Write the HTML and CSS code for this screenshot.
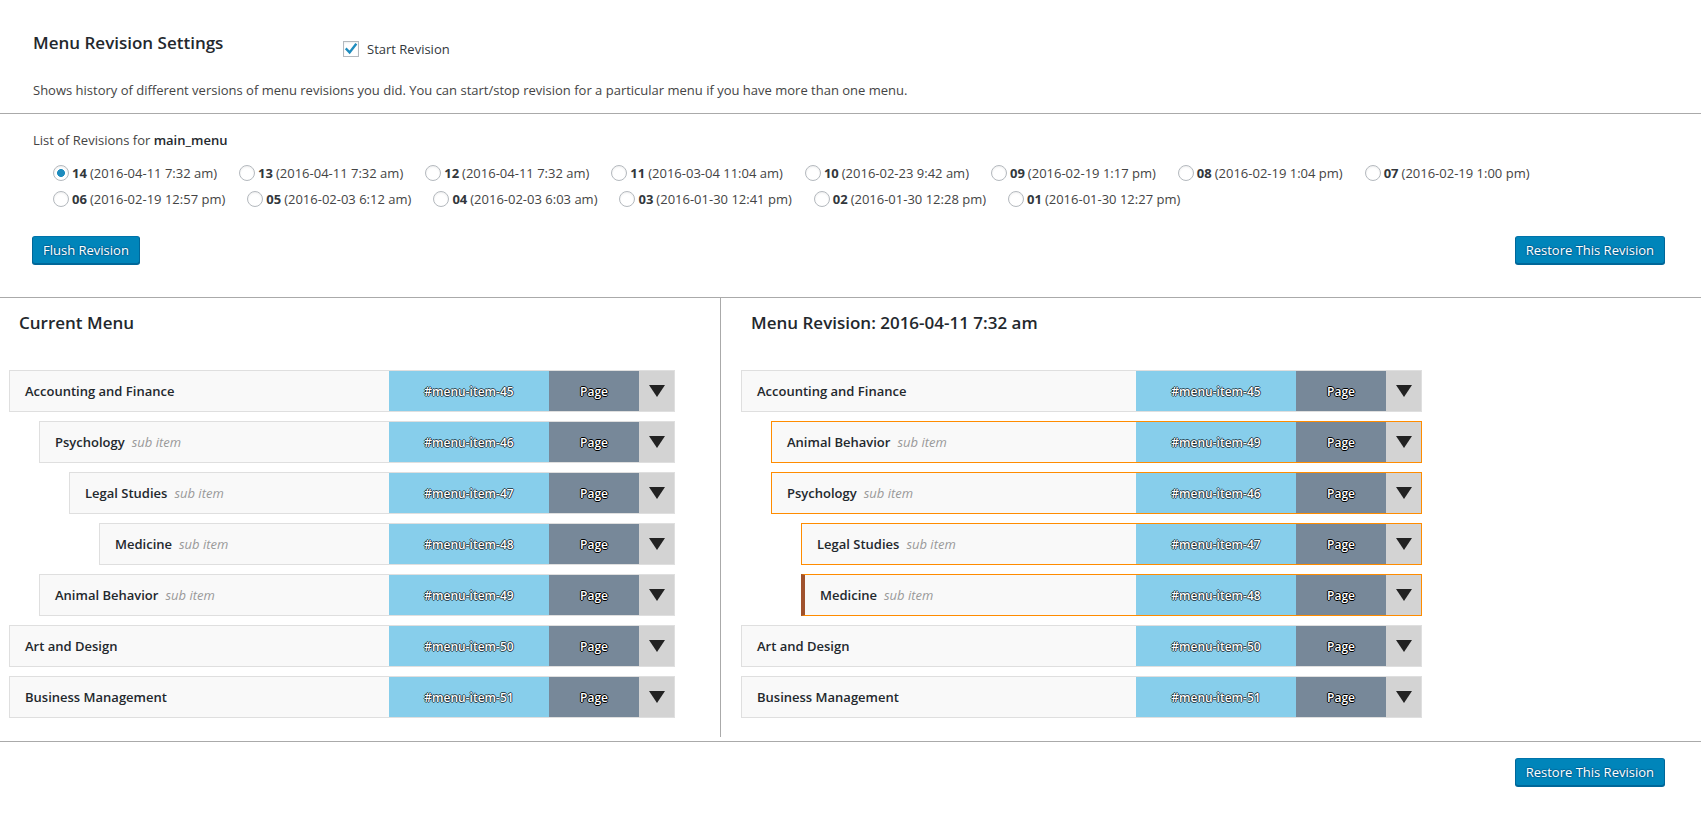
FILE: index.html
```html
<!DOCTYPE html>
<html lang="en">
<head>
<meta charset="utf-8">
<title>Menu Revision Settings</title>
<link rel="stylesheet" href="styles.css">
</head>
<body>
<section class="settings">
  <div class="settings-head">
    <h2 class="title">Menu Revision Settings</h2>
    <label class="start">
      <span class="checkbox"><svg width="14" height="14" viewBox="0 0 14 14"><path d="M2.6 7.2 L5.6 10.4 L11.6 2.6" stroke="#1e8cbe" stroke-width="2.4" fill="none" stroke-linecap="square"/></svg></span>
      <span>Start Revision</span>
    </label>
  </div>
  <p class="desc">Shows history of different versions of menu revisions you did. You can start/stop revision for a particular menu if you have more than one menu.</p>
</section>

<section class="revisions">
  <p class="list-title">List of Revisions for <b>main_menu</b></p>
  <div class="rev-rows">
    <div class="rev-row">
      <label class="rev"><span class="radio checked"></span><b>14</b> (2016-04-11 7:32 am)</label>
      <label class="rev"><span class="radio"></span><b>13</b> (2016-04-11 7:32 am)</label>
      <label class="rev"><span class="radio"></span><b>12</b> (2016-04-11 7:32 am)</label>
      <label class="rev"><span class="radio"></span><b>11</b> (2016-03-04 11:04 am)</label>
      <label class="rev"><span class="radio"></span><b>10</b> (2016-02-23 9:42 am)</label>
      <label class="rev"><span class="radio"></span><b>09</b> (2016-02-19 1:17 pm)</label>
      <label class="rev"><span class="radio"></span><b>08</b> (2016-02-19 1:04 pm)</label>
      <label class="rev"><span class="radio"></span><b>07</b> (2016-02-19 1:00 pm)</label>
    </div>
    <div class="rev-row">
      <label class="rev"><span class="radio"></span><b>06</b> (2016-02-19 12:57 pm)</label>
      <label class="rev"><span class="radio"></span><b>05</b> (2016-02-03 6:12 am)</label>
      <label class="rev"><span class="radio"></span><b>04</b> (2016-02-03 6:03 am)</label>
      <label class="rev"><span class="radio"></span><b>03</b> (2016-01-30 12:41 pm)</label>
      <label class="rev"><span class="radio"></span><b>02</b> (2016-01-30 12:28 pm)</label>
      <label class="rev"><span class="radio"></span><b>01</b> (2016-01-30 12:27 pm)</label>
    </div>
  </div>
  <div class="actions">
    <button class="btn">Flush Revision</button>
    <button class="btn">Restore This Revision</button>
  </div>
</section>

<section class="compare">
  <div class="col col-left">
    <h3 class="col-title">Current Menu</h3>
    <div class="menu-list">
      <div class="item lvl0"><span class="label">Accounting and Finance</span><span class="hash">#menu-item-45</span><span class="type">Page</span><span class="arrow"></span></div>
      <div class="item lvl1"><span class="label">Psychology<i>sub item</i></span><span class="hash">#menu-item-46</span><span class="type">Page</span><span class="arrow"></span></div>
      <div class="item lvl2"><span class="label">Legal Studies<i>sub item</i></span><span class="hash">#menu-item-47</span><span class="type">Page</span><span class="arrow"></span></div>
      <div class="item lvl3"><span class="label">Medicine<i>sub item</i></span><span class="hash">#menu-item-48</span><span class="type">Page</span><span class="arrow"></span></div>
      <div class="item lvl1"><span class="label">Animal Behavior<i>sub item</i></span><span class="hash">#menu-item-49</span><span class="type">Page</span><span class="arrow"></span></div>
      <div class="item lvl0"><span class="label">Art and Design</span><span class="hash">#menu-item-50</span><span class="type">Page</span><span class="arrow"></span></div>
      <div class="item lvl0"><span class="label">Business Management</span><span class="hash">#menu-item-51</span><span class="type">Page</span><span class="arrow"></span></div>
    </div>
  </div>
  <div class="col col-right">
    <h3 class="col-title">Menu Revision: 2016-04-11 7:32 am</h3>
    <div class="menu-list">
      <div class="item lvl0"><span class="label">Accounting and Finance</span><span class="hash">#menu-item-45</span><span class="type">Page</span><span class="arrow"></span></div>
      <div class="item lvl1 changed"><span class="label">Animal Behavior<i>sub item</i></span><span class="hash">#menu-item-49</span><span class="type">Page</span><span class="arrow"></span></div>
      <div class="item lvl1 changed"><span class="label">Psychology<i>sub item</i></span><span class="hash">#menu-item-46</span><span class="type">Page</span><span class="arrow"></span></div>
      <div class="item lvl2 changed"><span class="label">Legal Studies<i>sub item</i></span><span class="hash">#menu-item-47</span><span class="type">Page</span><span class="arrow"></span></div>
      <div class="item lvl2 changed moved"><span class="label">Medicine<i>sub item</i></span><span class="hash">#menu-item-48</span><span class="type">Page</span><span class="arrow"></span></div>
      <div class="item lvl0"><span class="label">Art and Design</span><span class="hash">#menu-item-50</span><span class="type">Page</span><span class="arrow"></span></div>
      <div class="item lvl0"><span class="label">Business Management</span><span class="hash">#menu-item-51</span><span class="type">Page</span><span class="arrow"></span></div>
    </div>
  </div>
</section>

<section class="bottom">
  <button class="btn">Restore This Revision</button>
</section>
</body>
</html>
```

FILE: styles.css
```css
* { box-sizing: border-box; }

body {
  margin: 0;
  background: #fff;
  color: #444;
  font-family: "Open Sans", "Noto Sans", sans-serif;
  font-size: 13px;
}

p { margin: 0; }

/* ---------- settings ---------- */
.settings {
  padding: 30px 36px 13px 33px;
  border-bottom: 1px solid #aaa;
}

.settings-head {
  display: flex;
  align-items: flex-start;
}

.title {
  margin: 0;
  width: 310px;
  font-size: 17px;
  font-weight: 600;
  line-height: 26px;
  color: #23282d;
}

.start {
  display: flex;
  align-items: center;
  gap: 8px;
  margin-top: 9px;
  line-height: 20px;
  color: #32373c;
}

.checkbox {
  width: 16px;
  height: 16px;
  border: 1px solid #b4b9be;
  background: #fff;
  box-shadow: inset 0 1px 2px rgba(0, 0, 0, 0.07);
  display: flex;
  align-items: center;
  justify-content: center;
}

.desc {
  margin-top: 21px;
  line-height: 20px;
}

/* ---------- revisions ---------- */
.revisions {
  padding: 16px 36px 33px 32px;
  border-bottom: 1px solid #aaa;
}

.list-title {
  line-height: 20px;
  padding-left: 1px;
}

.list-title b { font-weight: 600; color: #23282d; }

.rev-rows {
  margin: 10px 0 0 21px;
}

.rev-row {
  display: flex;
  height: 26px;
  align-items: center;
}

.rev {
  display: flex;
  align-items: center;
  margin-right: 22px;
  white-space: nowrap;
  color: #444;
}

.rev b { font-weight: 700; color: #32373c; margin-right: 3px; }

.radio {
  width: 16px;
  height: 16px;
  border-radius: 50%;
  border: 1px solid #b4b9be;
  background: #fff;
  box-shadow: inset 0 1px 2px rgba(0, 0, 0, 0.07);
  margin-right: 3px;
  flex: none;
}

.radio.checked {
  background: radial-gradient(circle, #1e8cbe 0, #1e8cbe 3.6px, #fff 4.3px);
}

.actions {
  margin-top: 24px;
  display: flex;
  justify-content: space-between;
}

.btn {
  font-family: inherit;
  font-size: 13px;
  line-height: 26px;
  height: 28px;
  padding: 0 10px 1px;
  border: 1px solid;
  border-color: #0073aa #006799 #006799;
  background: #0085ba;
  color: #fff;
  border-radius: 3px;
  box-shadow: 0 1px 0 #006799;
  text-shadow: 0 -1px 1px #006799, 1px 0 1px #006799, 0 1px 1px #006799, -1px 0 1px #006799;
  cursor: pointer;
}

/* ---------- compare ---------- */
.compare {
  display: flex;
  border-bottom: 1px solid #aaa;
  padding-bottom: 4px;
}

.col {
  padding-top: 13px;
  padding-bottom: 19px;
}

.col-left {
  width: 721px;
  border-right: 1px solid #aaa;
}

.col-right {
  flex: 1;
}

.col-title {
  margin: 0 0 35px;
  font-size: 17px;
  font-weight: 600;
  line-height: 24px;
  color: #23282d;
}

.col-left .col-title { padding-left: 19px; }
.col-right .col-title { padding-left: 30px; }

.col-left .menu-list { margin-left: 9px; width: 666px; }
.col-right .menu-list { margin-left: 20px; width: 681px; }

.item {
  display: flex;
  height: 42px;
  border: 1px solid #dfdfdf;
  background: #f9f9f9;
  margin-bottom: 9px;
}

.item:last-child { margin-bottom: 0; }

.lvl1 { margin-left: 30px; }
.lvl2 { margin-left: 60px; }
.lvl3 { margin-left: 90px; }

.item.changed { border-color: #ff8c00; }
.item.moved { border-left: 4px solid #a0522d; }
.item.moved .label { padding-left: 15px; }

.label {
  flex: 1;
  display: flex;
  align-items: center;
  padding-left: 15px;
  font-weight: 600;
  color: #23282d;
  white-space: nowrap;
}

.label i {
  font-style: italic;
  font-weight: 400;
  color: #999;
  margin-left: 7px;
}

.hash, .type {
  display: flex;
  align-items: center;
  justify-content: center;
  color: #fff;
  font-size: 12px;
  font-weight: 600;
  text-shadow: -1px 0 0 rgba(0, 0, 0, 0.65), 1px 0 0 rgba(0, 0, 0, 0.65), 0 -1px 0 rgba(0, 0, 0, 0.65), 0 1px 0 rgba(0, 0, 0, 0.65);
}

.hash { width: 160px; background: #87ceeb; }
.type { width: 90px; background: #778899; }
.type { text-shadow: -1px 0 0 #000, 1px 0 0 #000, 0 -1px 0 #000, 0 1px 0 #000; }

.arrow {
  width: 35px;
  background: #d3d3d3;
  display: flex;
  align-items: center;
  justify-content: center;
}

.arrow::after {
  content: "";
  width: 0;
  height: 0;
  border-left: 8.5px solid transparent;
  border-right: 8.5px solid transparent;
  border-top: 12px solid #222;
}

/* ---------- bottom ---------- */
.bottom {
  display: flex;
  justify-content: flex-end;
  padding: 16px 36px 20px;
}
```
